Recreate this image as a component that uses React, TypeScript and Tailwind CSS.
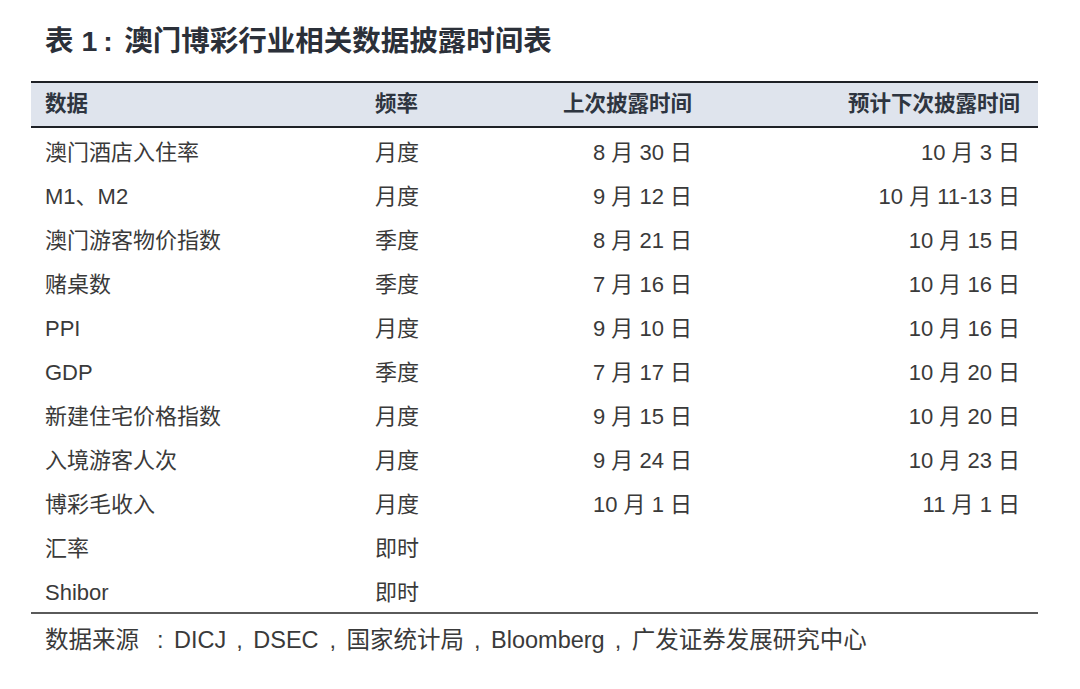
import React from "react";

const rows: [string, string, string, string][] = [
  ["澳门酒店入住率", "月度", "8 月 30 日", "10 月 3 日"],
  ["M1、M2", "月度", "9 月 12 日", "10 月 11-13 日"],
  ["澳门游客物价指数", "季度", "8 月 21 日", "10 月 15 日"],
  ["赌桌数", "季度", "7 月 16 日", "10 月 16 日"],
  ["PPI", "月度", "9 月 10 日", "10 月 16 日"],
  ["GDP", "季度", "7 月 17 日", "10 月 20 日"],
  ["新建住宅价格指数", "月度", "9 月 15 日", "10 月 20 日"],
  ["入境游客人次", "月度", "9 月 24 日", "10 月 23 日"],
  ["博彩毛收入", "月度", "10 月 1 日", "11 月 1 日"],
  ["汇率", "即时", "", ""],
  ["Shibor", "即时", "", ""],
];

export default function App() {
  return (
    <div
      className="w-[1080px] h-[689px] bg-white overflow-hidden"
      style={{ fontFamily: '"Liberation Sans", "Noto Sans CJK SC", sans-serif' }}
    >
      <div className="pl-[31px] pt-[24px] w-[1038px]">
        <div className="pl-[14px] text-[28.5px] leading-[34px] font-bold text-[#2b3039] h-[57px] whitespace-nowrap">
          表 1<span className="inline-block w-[27px] pl-[6px]">:</span>澳门博彩行业相关数据披露时间表
        </div>
        <div className="border-t-[2px] border-b-[2px] border-[#1e2126] bg-[#dfe4ed] h-[47px] grid grid-cols-[330px_125px_192px_328px] items-center pl-[14px] pr-[18px] text-[21.5px] font-bold text-[#2e3540]">
          <div>数据</div>
          <div>频率</div>
          <div className="text-right">上次披露时间</div>
          <div className="text-right">预计下次披露时间</div>
        </div>
        <div className="border-b-[2px] border-[#5a5a5a]">
          {rows.map((r, i) => (
            <div
              key={i}
              className="h-[44px] grid grid-cols-[330px_125px_192px_328px] items-center pl-[14px] pr-[18px] text-[22px] text-[#3a3a3a] pt-[4px]"
            >
              <div>{r[0]}</div>
              <div>{r[1]}</div>
              <div className="text-right">{r[2]}</div>
              <div className="text-right">{r[3]}</div>
            </div>
          ))}
        </div>
        <div className="pl-[14px] pt-[11px] text-[23.5px] leading-[30px] text-[#3a3a3a] whitespace-nowrap">
          数据来源<span className="inline-block w-[35px] pl-[18px]">:</span>DICJ
          <span className="inline-block w-[27px] pl-[10px]">,</span>DSEC
          <span className="inline-block w-[28px] pl-[11px]">,</span>国家统计局
          <span className="inline-block w-[27px] pl-[10px]">,</span>Bloomberg
          <span className="inline-block w-[27px] pl-[10px]">,</span>广发证券发展研究中心
        </div>
      </div>
    </div>
  );
}
